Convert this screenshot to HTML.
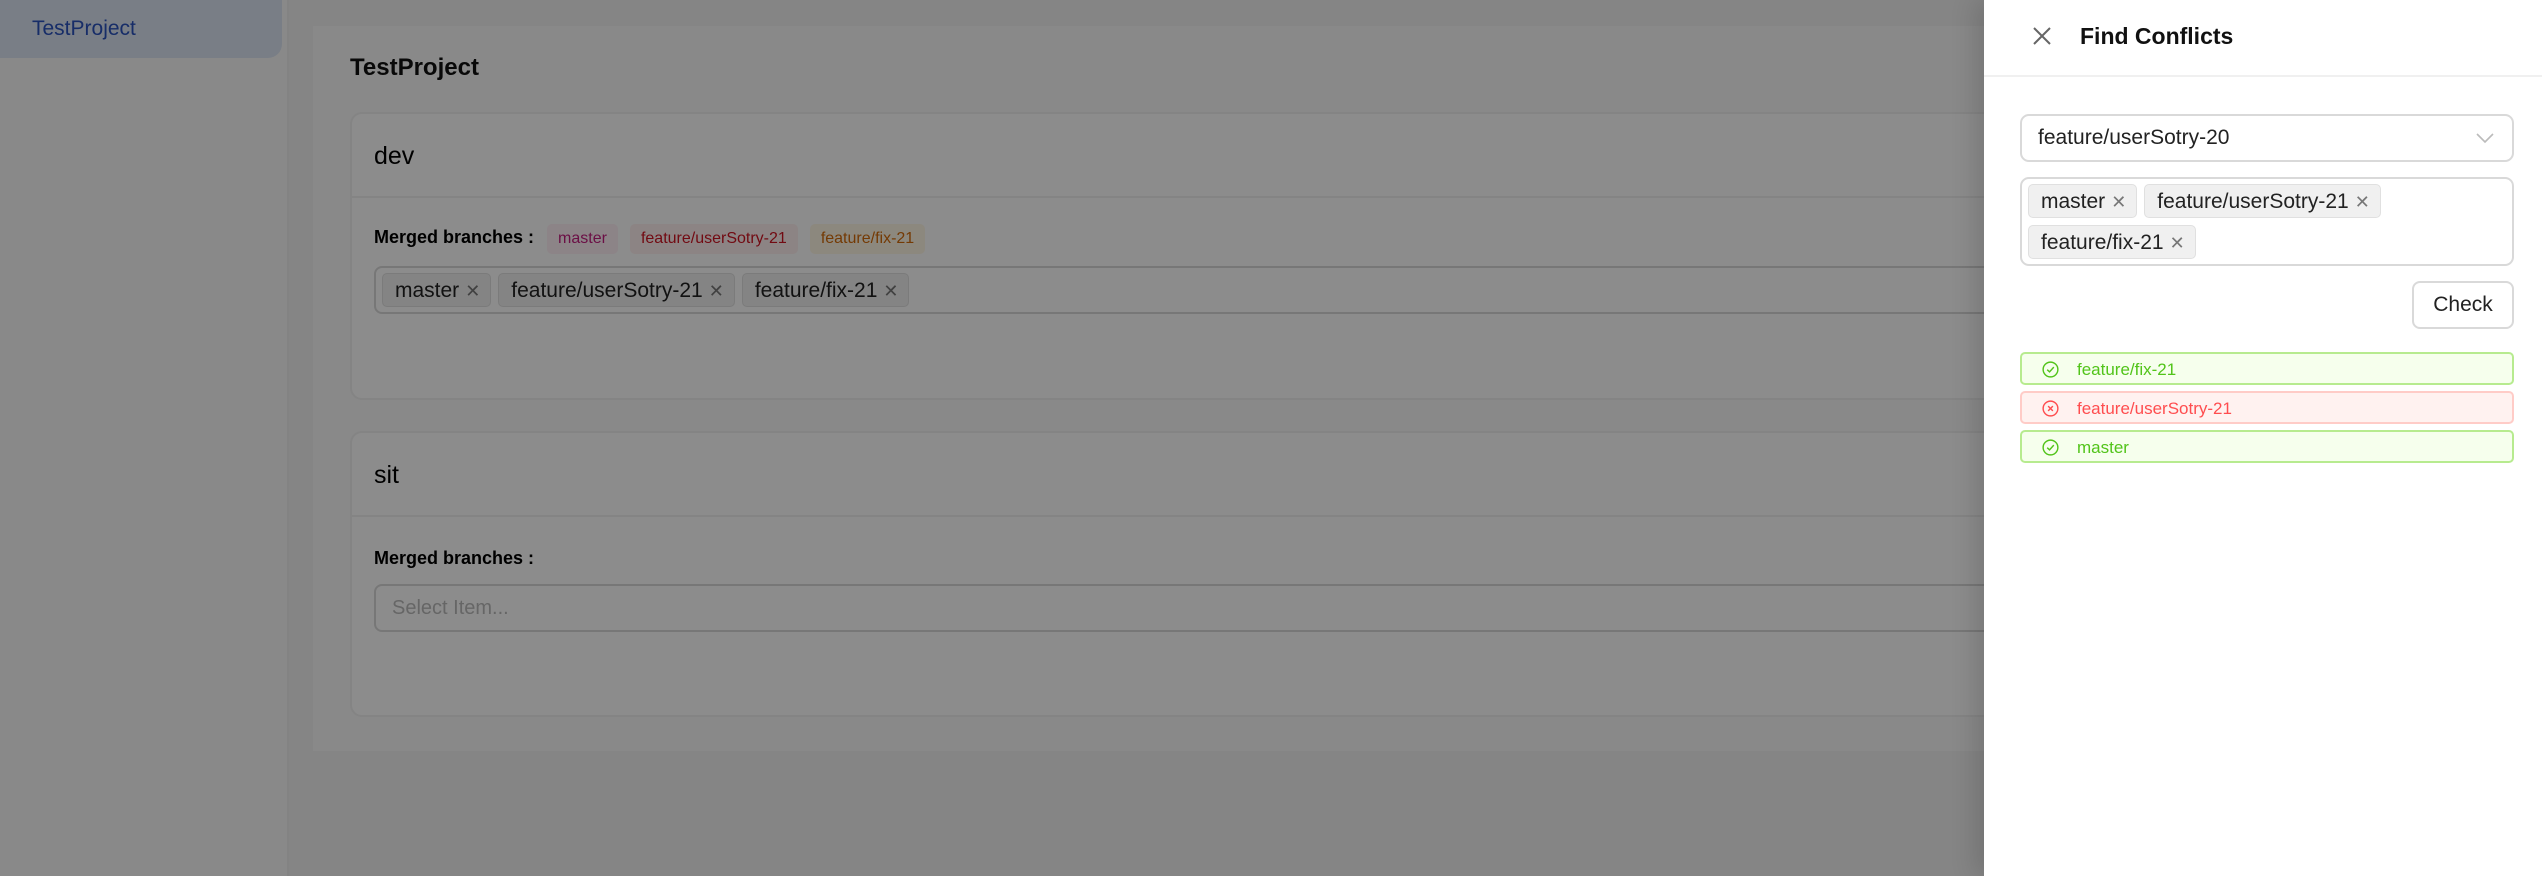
<!DOCTYPE html>
<html><head><meta charset="utf-8"><style>
*{box-sizing:border-box;margin:0;padding:0}
body{width:2542px;height:876px;overflow:hidden;position:relative;font-family:"Liberation Sans",sans-serif;background:#f2f2f2;color:#000}
.side{position:absolute;left:0;top:0;width:289px;height:876px;background:#fafafa;border-right:2px solid #efefef}
.menu{position:absolute;left:0;top:0;width:282px;height:58px;background:#dce6f4;border-radius:0 0 14px 0;color:#2a52be;font-size:21px;line-height:58px;padding-left:32px}
.panel{position:absolute;left:313px;top:26px;width:1700px;height:725px;background:#fafafa}
.h1{position:absolute;left:350px;top:54px;font-size:24px;font-weight:bold;color:#111}
.card{position:absolute;left:350px;width:1700px;background:#fff;border:2px solid #f0f0f0;border-radius:12px}
.card .hd{height:84px;border-bottom:2px solid #f0f0f0;font-size:25px;padding-left:22px;line-height:84px}
.lbl{position:absolute;left:22px;font-size:18px;font-weight:bold}
.tg{display:inline-block;font-size:16px;padding:0 11px;height:30px;line-height:30px;border-radius:5px;margin-right:12px;font-weight:normal}
.sel{position:absolute;left:22px;right:-10px;height:48px;border:2px solid #d9d9d9;border-radius:8px;padding:5px 6px}
.st{display:inline-block;height:34px;line-height:34px;background:#f0f0f0;border:1px solid #e0e0e0;border-radius:5px;padding:0 10px 0 12px;font-size:21px;color:#222;margin-right:7px}
.st i{font-style:normal;color:#777;font-size:18px;margin-left:6px}
.mask{position:absolute;left:0;top:0;width:1984px;height:876px;background:rgba(0,0,0,0.45)}
.drawer{position:absolute;left:1984px;top:0;width:558px;height:876px;background:#fff;box-shadow:-8px 0 24px rgba(0,0,0,0.15)}
.dh{height:77px;border-bottom:2px solid #f0f0f0;position:relative}
.dt{position:absolute;left:96px;top:23px;font-size:23px;font-weight:bold;color:#111}
.box{position:absolute;left:36px;width:494px;border:2px solid #d9d9d9;border-radius:9px}
.al{position:absolute;left:36px;width:494px;height:33px;border-radius:5px;font-size:17px;line-height:31px;padding-left:55px}
.al svg{position:absolute;left:20px;top:7px}
.ok{background:#f6ffed;border:2px solid #b7eb8f;color:#52c41a}
.er{background:#fff2f0;border:2px solid #ffccc7;color:#ff4d4f}
</style></head><body>
<div class="side"><div class="menu">TestProject</div></div>
<div class="panel"></div>
<div class="h1">TestProject</div>
<div class="card" style="top:112px;height:288px">
<div class="hd">dev</div>
<div class="lbl" style="top:108px;line-height:30px">Merged branches :
<span class="tg" style="margin-left:8px;background:#fff0f6;color:#c41d7f">master</span><span class="tg" style="background:#fff1f0;color:#cf1322">feature/userSotry-21</span><span class="tg" style="background:#fff7e6;color:#d46b08">feature/fix-21</span></div>
<div class="sel" style="top:152px"><span class="st">master<i>✕</i></span><span class="st">feature/userSotry-21<i>✕</i></span><span class="st">feature/fix-21<i>✕</i></span></div>
</div>
<div class="card" style="top:431px;height:286px">
<div class="hd">sit</div>
<div class="lbl" style="top:110px;line-height:30px">Merged branches :</div>
<div class="sel" style="top:151px;padding:0 16px;line-height:44px;font-size:20px;color:#bbb">Select Item...</div>
</div>
<div class="mask"></div>
<div class="drawer">
<div class="dh">
<svg style="position:absolute;left:48px;top:26px" width="20" height="20" viewBox="0 0 20 20"><path d="M2 2L18 18M18 2L2 18" stroke="#666" stroke-width="2"/></svg>
<div class="dt">Find Conflicts</div></div>
<div class="box" style="top:114px;height:48px;font-size:21px;line-height:44px;padding-left:16px;color:#222">feature/userSotry-20
<svg style="position:absolute;right:18px;top:16px" width="18" height="12" viewBox="0 0 18 12"><path d="M1 2L9 10L17 2" stroke="#bbb" stroke-width="1.6" fill="none"/></svg></div>
<div class="box" style="top:177px;height:89px;padding:5px 6px">
<span class="st">master<i>✕</i></span><span class="st">feature/userSotry-21<i>✕</i></span><br><span class="st" style="margin-top:7px">feature/fix-21<i>✕</i></span></div>
<div style="position:absolute;left:428px;top:281px;width:102px;height:48px;border:2px solid #d9d9d9;border-radius:8px;font-size:21px;line-height:44px;text-align:center;color:#222">Check</div>
<div class="al ok" style="top:352px"><svg width="17" height="17" viewBox="0 0 18 18"><circle cx="9" cy="9" r="7.8" stroke="#52c41a" stroke-width="1.5" fill="none"/><path d="M5.5 9.2L8 11.5L12.5 6.5" stroke="#52c41a" stroke-width="1.5" fill="none"/></svg>feature/fix-21</div>
<div class="al er" style="top:391px"><svg width="17" height="17" viewBox="0 0 18 18"><circle cx="9" cy="9" r="7.8" stroke="#ff4d4f" stroke-width="1.5" fill="none"/><path d="M6.5 6.5L11.5 11.5M11.5 6.5L6.5 11.5" stroke="#ff4d4f" stroke-width="1.5"/></svg>feature/userSotry-21</div>
<div class="al ok" style="top:430px"><svg width="17" height="17" viewBox="0 0 18 18"><circle cx="9" cy="9" r="7.8" stroke="#52c41a" stroke-width="1.5" fill="none"/><path d="M5.5 9.2L8 11.5L12.5 6.5" stroke="#52c41a" stroke-width="1.5" fill="none"/></svg>master</div>
</div>
</body></html>
